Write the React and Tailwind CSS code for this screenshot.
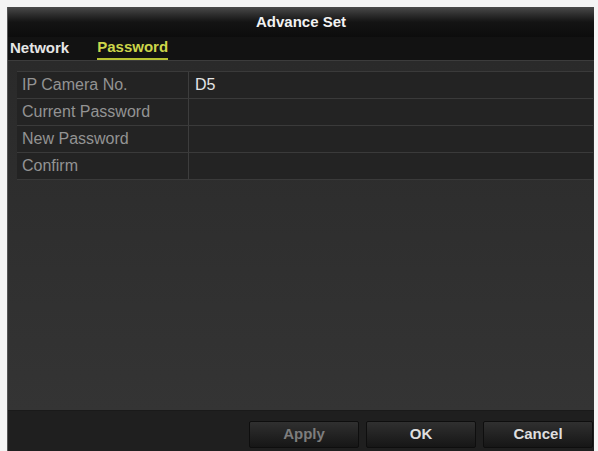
import React from 'react';

const rows = [
  { label: 'IP Camera No.', value: 'D5' },
  { label: 'Current Password', value: '' },
  { label: 'New Password', value: '' },
  { label: 'Confirm', value: '' },
];

function Btn({ children, dim }) {
  return (
    <button
      className={`w-[110px] h-[27px] rounded-[2px] border border-[#0e0e0e] bg-gradient-to-b from-[#303030] to-[#161616] text-[15px] font-bold ${
        dim ? 'text-[#7d7d7d]' : 'text-[#dedede]'
      }`}
    >
      {children}
    </button>
  );
}

export default function App() {
  return (
    <div
      className="w-[598px] h-[451px] bg-[#f4f4f4] pt-[7px] pl-[7px] pr-[4px] overflow-hidden"
      style={{ fontFamily: '"Liberation Sans", Arial, sans-serif' }}
    >
      <div className="h-[444px] flex flex-col bg-[#2c2c2c] border-l border-[#555]">
        {/* title bar */}
        <div className="h-[30px] flex items-center justify-center bg-gradient-to-b from-[#4a4a4a] via-[#141414] to-[#0c0c0c] text-[15px] font-bold text-[#f2f2f2]">
          Advance Set
        </div>

        {/* tabs */}
        <div className="h-[24px] flex items-end gap-[28px] pl-[2px] bg-[#121212] border-b border-[#3c3c3c]">
          <div className="pb-[5px] text-[15px] font-bold text-[#e6e6e6] leading-none">Network</div>
          <div className="pb-[2px] text-[15px] font-bold text-[#cdd64a] leading-none border-b-2 border-[#b8c232]">
            <div className="pb-[2px]">Password</div>
          </div>
        </div>

        {/* content */}
        <div className="flex-1 bg-gradient-to-b from-[#2a2a2a] to-[#343434] pt-[10px] pl-[9px] pr-[1px]">
          <div className="flex flex-col">
            {rows.map((r) => (
              <div key={r.label} className="flex h-[27px] border-t border-[#3a3a3a] bg-[#232323]">
                <div className="w-[172px] flex items-center pl-[5px] text-[16px] text-[#939393] border-r border-[#3d3d3d]">
                  {r.label}
                </div>
                <div className="flex-1 flex items-center pl-[6px] text-[16px] text-[#e4e4e4]">
                  {r.value}
                </div>
              </div>
            ))}
            <div className="h-px bg-[#3a3a3a]" />
          </div>
        </div>

        {/* bottom bar */}
        <div className="h-[41px] flex items-center justify-end gap-[7px] pr-[1px] pt-[6px] bg-[#1f1f1f] border-t border-[#1a1a1a]">
          <Btn dim>Apply</Btn>
          <Btn>OK</Btn>
          <Btn>Cancel</Btn>
        </div>
      </div>
    </div>
  );
}
